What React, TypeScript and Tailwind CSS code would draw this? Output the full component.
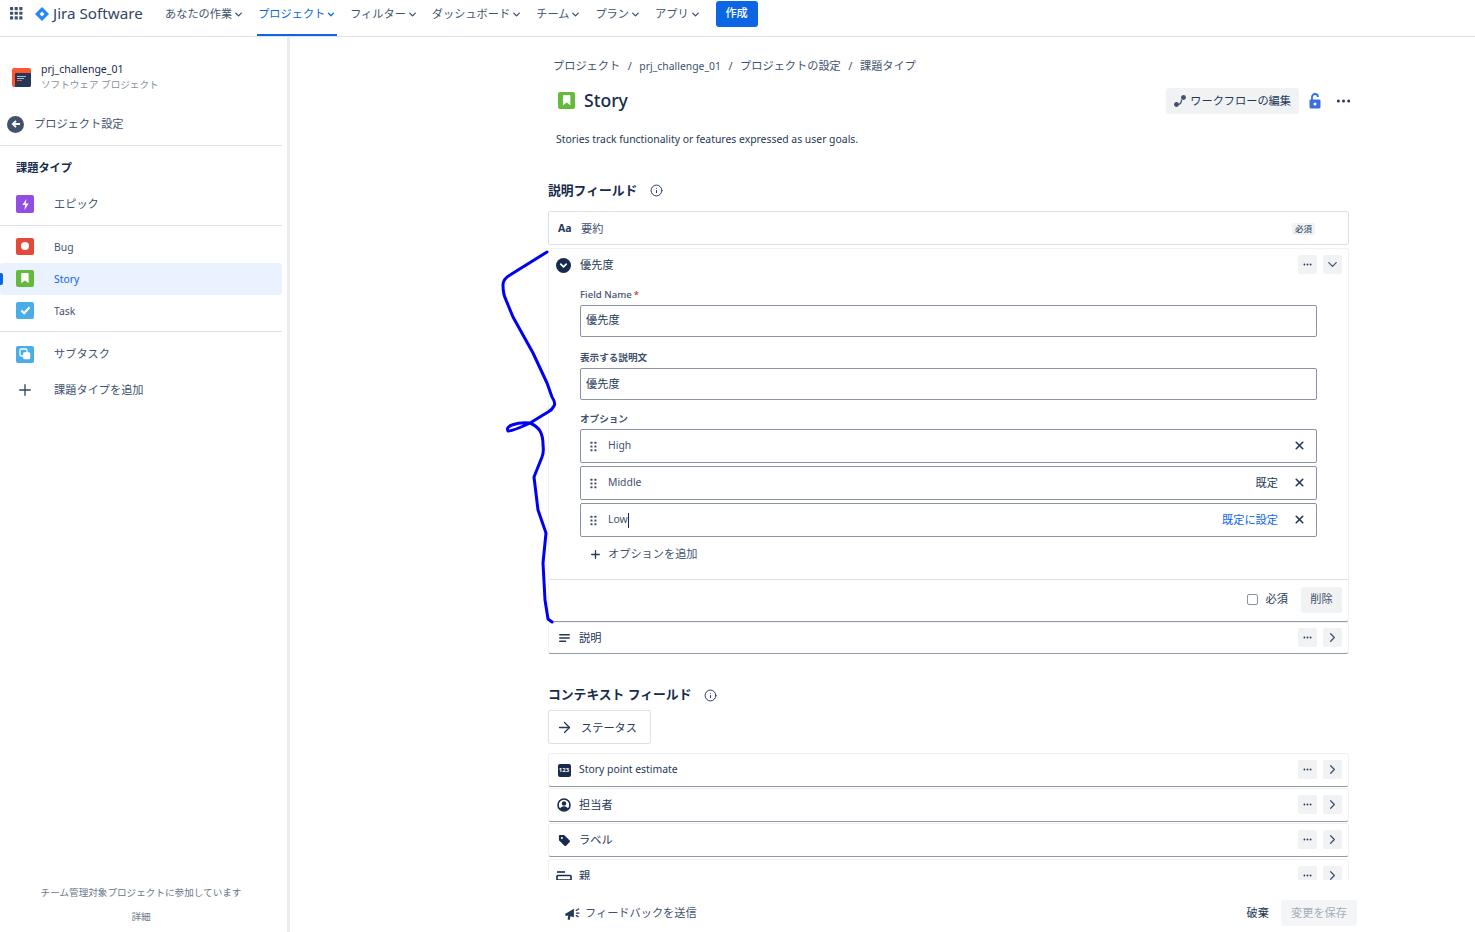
import React from "react";
import { ArrowRight, ChevronDown, ChevronRight, Info, Plus, X } from "lucide-react";

const navItems = [
  { label: "あなたの作業", active: false },
  { label: "プロジェクト", active: true },
  { label: "フィルター", active: false },
  { label: "ダッシュボード", active: false },
  { label: "チーム", active: false },
  { label: "プラン", active: false },
  { label: "アプリ", active: false },
];

const Dots = ({ className = "" }: { className?: string }) => (
  <svg viewBox="0 0 16 4" className={className} fill="currentColor">
    <circle cx="2.5" cy="2" r="1.6" />
    <circle cx="8" cy="2" r="1.6" />
    <circle cx="13.5" cy="2" r="1.6" />
  </svg>
);

const Grip = () => (
  <svg viewBox="0 0 8 12" className="w-[7px] h-[11px] text-[#42526e]" fill="currentColor">
    <rect x="0.5" y="0.5" width="2.4" height="2.4" rx="0.6" />
    <rect x="5" y="0.5" width="2.4" height="2.4" rx="0.6" />
    <rect x="0.5" y="4.8" width="2.4" height="2.4" rx="0.6" />
    <rect x="5" y="4.8" width="2.4" height="2.4" rx="0.6" />
    <rect x="0.5" y="9.1" width="2.4" height="2.4" rx="0.6" />
    <rect x="5" y="9.1" width="2.4" height="2.4" rx="0.6" />
  </svg>
);

const StoryIcon = ({ size }: { size: string }) => (
  <span className={`${size} rounded-[2px] bg-[#63ba3c] flex items-center justify-center shrink-0`}>
    <svg viewBox="0 0 10 11" className="w-[55%] h-[60%]" fill="#fff">
      <path d="M1 1a1 1 0 0 1 1-1h6a1 1 0 0 1 1 1v10L5 8l-4 3z" />
    </svg>
  </span>
);

const IssueIcon = ({ kind }: { kind: string }) => {
  if (kind === "epic")
    return (
      <span className="w-[18px] h-[18px] rounded-[2px] bg-[#904ee2] flex items-center justify-center">
        <svg viewBox="0 0 10 12" className="w-[9px] h-[11px]" fill="#fff">
          <path d="M6 0 1.5 6.6H4.6L3.8 12 8.6 4.8H5.4z" />
        </svg>
      </span>
    );
  if (kind === "bug")
    return (
      <span className="w-[18px] h-[17px] mb-[2px] rounded-[2px] bg-[#e5493a] flex items-center justify-center">
        <span className="w-[8px] h-[8px] rounded-full bg-white" />
      </span>
    );
  if (kind === "story") return <StoryIcon size="w-[18px] h-[17px] mb-[2px]" />;
  if (kind === "task")
    return (
      <span className="w-[18px] h-[17px] mb-[2px] rounded-[2px] bg-[#4bade8] flex items-center justify-center">
        <svg viewBox="0 0 12 10" className="w-[11px] h-[9px]" fill="none" stroke="#fff" strokeWidth="2.4">
          <path d="M1.5 5 4.5 8 10.5 1.5" />
        </svg>
      </span>
    );
  return (
    <span className="w-[18px] h-[17px] rounded-[2px] bg-[#4bade8] flex items-center justify-center">
      <svg viewBox="0 0 12 12" className="w-[12px] h-[12px]">
        <rect x="1" y="1" width="7" height="7" rx="1.4" fill="#4bade8" stroke="#fff" strokeWidth="1.3" />
        <rect x="4.2" y="4.2" width="7" height="7" rx="1.2" fill="#fff" />
      </svg>
    </span>
  );
};

const SmallButton = ({ children }: { children: React.ReactNode }) => (
  <span className="w-[19px] h-[19px] rounded-[2px] bg-[#f1f2f4] flex items-center justify-center text-[#42526e]">
    {children}
  </span>
);

const RowActions = ({ open = false }: { open?: boolean }) => (
  <div className="ml-auto mb-[2px] flex items-center gap-[6px]">
    <SmallButton>
      <Dots className="w-[9px] h-[3px] text-[#253858]" />
    </SmallButton>
    <SmallButton>
      {open ? <ChevronDown size={15} strokeWidth={2} /> : <ChevronRight size={15} strokeWidth={2} />}
    </SmallButton>
  </div>
);

const FieldRow = ({
  icon,
  label,
  className = "h-[34px]",
  labelClass = "text-[11.2px]",
}: {
  icon: React.ReactNode;
  label: string;
  className?: string;
  labelClass?: string;
}) => (
  <div
    className={`flex items-center pl-[7px] pr-[6px] rounded-[3px] border border-[#f0f1f3] border-b-[#8f99a8] ${className}`}
  >
    <span className="w-[16px] h-[16px] flex items-center justify-center shrink-0">{icon}</span>
    <span className={`ml-[7px] text-[#253858] ${labelClass}`}>{label}</span>
    <RowActions />
  </div>
);

const OptionRow = ({ label, right, caret }: { label: string; right?: React.ReactNode; caret?: boolean }) => (
  <div className="flex items-center h-[34px] rounded-[2px] border border-[#8993a4] pl-[9px] pr-[10px]">
    <Grip />
    <span className="ml-[11px] text-[#42526e] text-[10.4px]">{label}</span>
    {caret && <span className="w-px h-[15px] bg-[#172b4d]" />}
    <span className="ml-auto mr-[15px] text-[11.2px]">{right}</span>
    <X size={13} strokeWidth={3} className="mb-[2px] text-[#253858]" />
  </div>
);

export default function App() {
  return (
    <div className="relative w-[1475px] h-[932px] overflow-hidden bg-white text-[#42526e] font-['Noto_Sans','Noto_Sans_CJK_JP',sans-serif] text-[11.2px]">
      {/* Top nav */}
      <header className="flex items-center h-[37px] border-b border-[#dfe1e6] pl-[10px]">
        <svg viewBox="0 0 14 14" className="mb-[9px] w-[13px] h-[13px] text-[#42526e]" fill="currentColor">
          {[0, 5, 10].map((y) =>
            [0, 5, 10].map((x) => <rect key={`${x}-${y}`} x={x} y={y} width="3.4" height="3.4" rx="0.6" />)
          )}
        </svg>
        <svg viewBox="0 0 16 16" className="mb-[9px] ml-[12px] w-[14px] h-[14px]">
          <path d="M8 0 16 8 8 16 0 8z" fill="#2684ff" />
          <path d="M8 5.2 10.8 8 8 10.8 5.2 8z" fill="#fff" />
        </svg>
        <span className="mb-[9px] ml-[4px] text-[#344563] text-[15.2px] w-[111px] whitespace-nowrap">Jira Software</span>
        <nav className="flex items-center h-full">
          {navItems.map((item) => (
            <div
              key={item.label}
              className={`flex items-center h-full px-[1px] mr-[12px] border-b-2 pb-[6px] whitespace-nowrap ${
                item.active ? "border-[#0c66e4] text-[#0c66e4] w-[80px]" : "border-transparent text-[#42526e]"
              }`}
            >
              <span>{item.label}</span>
              <ChevronDown size={11} strokeWidth={3} className="ml-[1px]" />
            </div>
          ))}
          <button className="ml-[2px] mb-[9px] w-[42px] h-[26px] rounded-[3px] bg-[#0c66e4] text-white font-medium text-[11.2px]">
            作成
          </button>
        </nav>
      </header>

      <div className="flex h-[895px]">
        {/* Sidebar */}
        <aside className="w-[290px] shrink-0 border-r-[3px] border-[#ebecf0] pr-[5px] flex flex-col">
          <div className="flex items-center pl-[12px] pt-[25px]">
            <span className="w-[19px] h-[19px] rounded-[2px] bg-[#ff5630] flex items-end justify-end overflow-hidden">
              <span className="w-[16px] h-[14px] bg-[#253858] rounded-tl-[1px] flex flex-col gap-[1px] pt-[3px] pl-[2px]">
                <span className="w-[9px] h-[1px] bg-[#b3bac5]" />
                <span className="w-[7px] h-[1px] bg-[#b3bac5]" />
                <span className="w-[5px] h-[1px] bg-[#ff5630]" />
              </span>
            </span>
            <div className="ml-[10px] leading-[15px]">
              <div className="text-[#172b4d] text-[10.5px]">prj_challenge_01</div>
              <div className="text-[#8590a2] text-[9.6px]">ソフトウェア プロジェクト</div>
            </div>
          </div>
          <div className="flex items-center pl-[7px] mt-[20px] h-[24px]">
            <span className="w-[17px] h-[17px] rounded-full bg-[#42526e] flex items-center justify-center">
              <svg viewBox="0 0 10 10" className="w-[10px] h-[10px]" fill="none" stroke="#fff" strokeWidth="1.8">
                <path d="M9 5H2M5 1.8 1.8 5 5 8.2" />
              </svg>
            </span>
            <span className="ml-[10px]">プロジェクト設定</span>
          </div>
          <div className="mt-[9px] h-[1px] bg-[#dfe1e6]" />
          <div className="mt-[14px] pl-[16px] text-[#172b4d] font-semibold text-[11.2px] leading-[16px]">課題タイプ</div>
          <div className="flex items-center pl-[16px] mt-[10px] h-[36px]">
            <IssueIcon kind="epic" />
            <span className="ml-[20px]">エピック</span>
          </div>
          <div className="h-[1px] bg-[#dfe1e6] mt-[3px]" />
          <div className="mt-[5px]">
            <div className="flex items-center pl-[16px] h-[32px]">
              <IssueIcon kind="bug" />
              <span className="ml-[20px] mt-[2px] text-[10.4px]">Bug</span>
            </div>
            <div className="relative flex items-center pl-[16px] h-[32px] rounded-[3px] bg-[#e9f2fe] text-[#0c66e4]">
              <span className="absolute left-0 top-[10px] w-[3px] h-[12px] rounded-r-[2px] bg-[#0c66e4]" />
              <IssueIcon kind="story" />
              <span className="ml-[20px] mt-[2px] text-[10.4px]">Story</span>
            </div>
            <div className="flex items-center pl-[16px] h-[32px]">
              <IssueIcon kind="task" />
              <span className="ml-[20px] mt-[2px] text-[10.4px]">Task</span>
            </div>
          </div>
          <div className="h-[1px] bg-[#dfe1e6] mt-[4px]" />
          <div className="flex items-center pl-[16px] mt-[4px] h-[36px]">
            <IssueIcon kind="subtask" />
            <span className="ml-[20px]">サブタスク</span>
          </div>
          <div className="flex items-center pl-[16px] h-[36px]">
            <Plus size={18} strokeWidth={1.8} className="text-[#344563]" />
            <span className="ml-[20px]">課題タイプを追加</span>
          </div>
          <div className="mt-auto mb-[8px] text-center text-[#6b778c] text-[9.6px]">
            <div className="leading-[14px] mb-[10px]">チーム管理対象プロジェクトに参加しています</div>
            <div className="leading-[14px]">詳細</div>
          </div>
        </aside>

        {/* Main column */}
        <main className="flex-1 flex flex-col min-w-0">
          <div className="h-[843px] overflow-hidden pl-[258px] pr-[126px]">
            <div className="pl-[5px] pt-[21px] leading-[16px] flex gap-[7.5px] text-[#42526e]">
              <span>プロジェクト</span>
              <span>/</span>
              <span className="text-[10.4px]">prj_challenge_01</span>
              <span>/</span>
              <span>プロジェクトの設定</span>
              <span>/</span>
              <span>課題タイプ</span>
            </div>
            <div className="relative flex items-center h-[27px] mt-[13px] pl-[10px]">
              <StoryIcon size="w-[17px] h-[17px]" />
              <span className="ml-[9px] text-[#172b4d] text-[17.6px] font-medium">Story</span>
              <div className="absolute right-[-2px] top-[1px] flex items-center">
                <span className="flex items-center h-[26px] px-[8px] rounded-[3px] bg-[#f1f2f4] text-[#253858]">
                  <svg viewBox="0 0 12 12" className="w-[12px] h-[12px] text-[#42526e] mr-[4px]" fill="none" stroke="currentColor" strokeWidth="1.3">
                    <circle cx="2.5" cy="9.5" r="1.8" fill="currentColor" />
                    <circle cx="9.5" cy="2.5" r="1.8" fill="currentColor" />
                    <path d="M4 9.5c2.5 0 3.4-1.5 3.6-5" />
                  </svg>
                  ワークフローの編集
                </span>
                <svg viewBox="0 0 12 16" className="ml-[10px] w-[12px] h-[16px]">
                  <path d="M3 7V4a3 3 0 0 1 6 0" fill="none" stroke="#2f6fe8" strokeWidth="1.8" />
                  <rect x="0.5" y="6.5" width="11" height="9" rx="1.4" fill="#3b6fe0" />
                  <circle cx="6" cy="11" r="1.5" fill="#fff" />
                </svg>
                <Dots className="ml-[15px] w-[15px] h-[4px] text-[#253858]" />
              </div>
            </div>
            <p className="mt-[17px] pl-[8px] leading-[16px] text-[#253858] text-[10.4px]">
              Stories track functionality or features expressed as user goals.
            </p>

            <div className="mt-[33px] flex items-center h-[20px] text-[#172b4d] font-semibold text-[12.8px]">
              <span className="mt-[1px]">説明フィールド</span>
              <Info size={13} strokeWidth={1.8} className="ml-[13px] text-[#253858]" />
            </div>

            <div className="mt-[11px] flex items-center h-[34px] pl-[9px] pr-[33px] pt-[2px] rounded-[2px] border border-[#dfe1e6]">
              <span className="font-bold text-[10.5px] text-[#253858] w-[23px]">Aa</span>
              <span>要約</span>
              <span className="ml-auto px-[3px] rounded-[2px] bg-[#f1f2f4] text-[8.5px] leading-[12px] font-medium">必須</span>
            </div>

            <section className="mt-[3px] h-[374px] rounded-[3px] border border-[#f0f1f3] border-b-[#8f99a8] flex flex-col">
              <div className="flex items-center h-[33px] pl-[7px] pr-[6px] shrink-0">
                <span className="w-[15px] h-[15px] rounded-full bg-[#172b4d] flex items-center justify-center">
                  <ChevronDown size={11} strokeWidth={3.5} className="text-white" />
                </span>
                <span className="ml-[9px] text-[#253858]">優先度</span>
                <RowActions open />
              </div>
              <div className="pl-[31px] pr-[31px] flex flex-col">
                <div className="mt-[5px] h-[16px] leading-[16px] text-[9.6px] text-[#42526e] font-medium">
                  Field Name<span className="text-[#c9372c] ml-[2px]">*</span>
                </div>
                <div className="mt-[2px] h-[32px] flex items-center px-[5px] pb-[2px] rounded-[2px] border border-[#8993a4] text-[#253858]">
                  優先度
                </div>
                <div className="mt-[13px] h-[16px] leading-[16px] text-[9.6px] font-semibold">表示する説明文</div>
                <div className="mt-[2px] h-[32px] flex items-center px-[5px] rounded-[2px] border border-[#8993a4] text-[#253858]">
                  優先度
                </div>
                <div className="mt-[11px] h-[16px] leading-[16px] text-[9.6px] font-semibold">オプション</div>
                <div className="mt-[2px] flex flex-col gap-[3px]">
                  <OptionRow label="High" />
                  <OptionRow label="Middle" right={<span className="text-[#253858]">既定</span>} />
                  <OptionRow label="Low" caret right={<span className="text-[#0c66e4]">既定に設定</span>} />
                </div>
                <div className="mt-[7px] h-[20px] pl-[9px] flex items-center text-[#42526e]">
                  <Plus size={13} strokeWidth={2.4} className="text-[#253858]" />
                  <span className="ml-[6px]">オプションを追加</span>
                </div>
              </div>
              <div className="mt-[15px] border-t border-[#dfe1e6] h-[40px] flex items-center justify-end pr-[6px]">
                <span className="w-[11px] h-[11px] rounded-[2px] border border-[#8993a4]" />
                <span className="ml-[8px] text-[#253858]">必須</span>
                <span className="ml-[13px] w-[41px] h-[26px] rounded-[3px] bg-[#f1f2f4] flex items-center justify-center text-[#42526e]">
                  削除
                </span>
              </div>
            </section>

            <FieldRow
              className="h-[32px]"
              label="説明"
              icon={
                <svg viewBox="0 0 12 10" className="w-[11px] h-[9px] text-[#253858]" fill="currentColor">
                  <rect width="12" height="1.7" rx="0.5" />
                  <rect y="3.6" width="12" height="1.7" rx="0.5" />
                  <rect y="7.2" width="8" height="1.7" rx="0.5" />
                </svg>
              }
            />

            <div className="mt-[31px] flex items-center h-[20px] text-[#172b4d] font-semibold text-[12.8px]">
              コンテキスト フィールド
              <Info size={13} strokeWidth={1.8} className="ml-[13px] text-[#253858]" />
            </div>
            <div className="mt-[5px] w-[103px] h-[34px] flex items-center pl-[7px] pt-[2px] rounded-[2px] border border-[#dfe1e6] text-[#253858]">
              <ArrowRight size={17} strokeWidth={1.8} className="mb-[2px]" />
              <span className="ml-[8px]">ステータス</span>
            </div>

            <div className="mt-[9px] flex flex-col gap-[1px]">
              <FieldRow
                label="Story point estimate"
                labelClass="text-[10.4px]"
                icon={
                  <span className="w-[13px] h-[13px] rounded-[2px] bg-[#172b4d] text-white text-[6px] font-bold leading-none flex items-center justify-center">
                    123
                  </span>
                }
              />
              <FieldRow
                label="担当者"
                icon={
                  <svg viewBox="0 0 14 14" className="w-[14px] h-[14px]">
                    <circle cx="7" cy="7" r="6" fill="none" stroke="#172b4d" strokeWidth="1.6" />
                    <circle cx="7" cy="5.5" r="2.2" fill="#172b4d" />
                    <path d="M2.8 11c.8-2 2.4-2.8 4.2-2.8s3.4.8 4.2 2.8a6 6 0 0 1-8.4 0z" fill="#172b4d" />
                  </svg>
                }
              />
              <FieldRow
                label="ラベル"
                icon={
                  <svg viewBox="0 0 14 14" className="w-[13px] h-[13px]">
                    <path d="M1 2a1 1 0 0 1 1-1h4.6l6 6a1.2 1.2 0 0 1 0 1.7L8.7 12.6a1.2 1.2 0 0 1-1.7 0l-6-6z" fill="#172b4d" />
                    <circle cx="4.2" cy="4.2" r="1.1" fill="#fff" />
                  </svg>
                }
              />
              <FieldRow
                className="mt-[1px] h-[34px]"
                label="親"
                icon={
                  <svg viewBox="0 0 16 10" className="w-[16px] h-[10px]" fill="none" stroke="#172b4d" strokeWidth="1.6">
                    <path d="M1 1h8" />
                    <rect x="1" y="4.5" width="14" height="4.5" rx="0.8" />
                  </svg>
                }
              />
            </div>
          </div>

          {/* Footer */}
          <div className="flex-1 flex items-center pl-[274px] pr-[118px] pt-[14px]">
            <svg viewBox="0 0 18 16" className="w-[17px] h-[15px]" fill="#253858">
              <path d="M1 8.5 10.5 3v9L6.8 10.8 6 15 3.8 14.5 4.4 10 1.8 10.6z" />
              <path d="M12.5 5 16 3M12.8 7.6h3.6M12.5 10l3 1.6" stroke="#253858" strokeWidth="1.3" fill="none" />
            </svg>
            <span className="ml-[4px] text-[#42526e]">フィードバックを送信</span>
            <span className="ml-auto text-[#253858]">破棄</span>
            <span className="ml-[12px] w-[76px] h-[26px] rounded-[3px] bg-[#f4f5f7] text-[#a5adba] flex items-center justify-center">
              変更を保存
            </span>
          </div>
        </main>
      </div>

      {/* Hand-drawn annotation over the page */}
      <svg className="absolute left-0 top-0 pointer-events-none" width="1475" height="932" fill="none">
        <path
          d="M547 252 L510 275 Q503 279 503 285 Q503 294 506 300 L513 317 L533 353 L547 383 L552 397 Q556 403 554 406 Q552 410 548 412 L530 423 Q520 422 512 425 Q506 427 508 431 Q513 431 530 423 Q537 426 540 431 Q543 436 543 445 Q544 452 542 457 L534 477 L538 510 L546 533 L543 563 L545 600 L548 619 L552 622"
          stroke="#0000f5"
          strokeWidth="3"
          strokeLinecap="round"
          strokeLinejoin="round"
        />
      </svg>
    </div>
  );
}
